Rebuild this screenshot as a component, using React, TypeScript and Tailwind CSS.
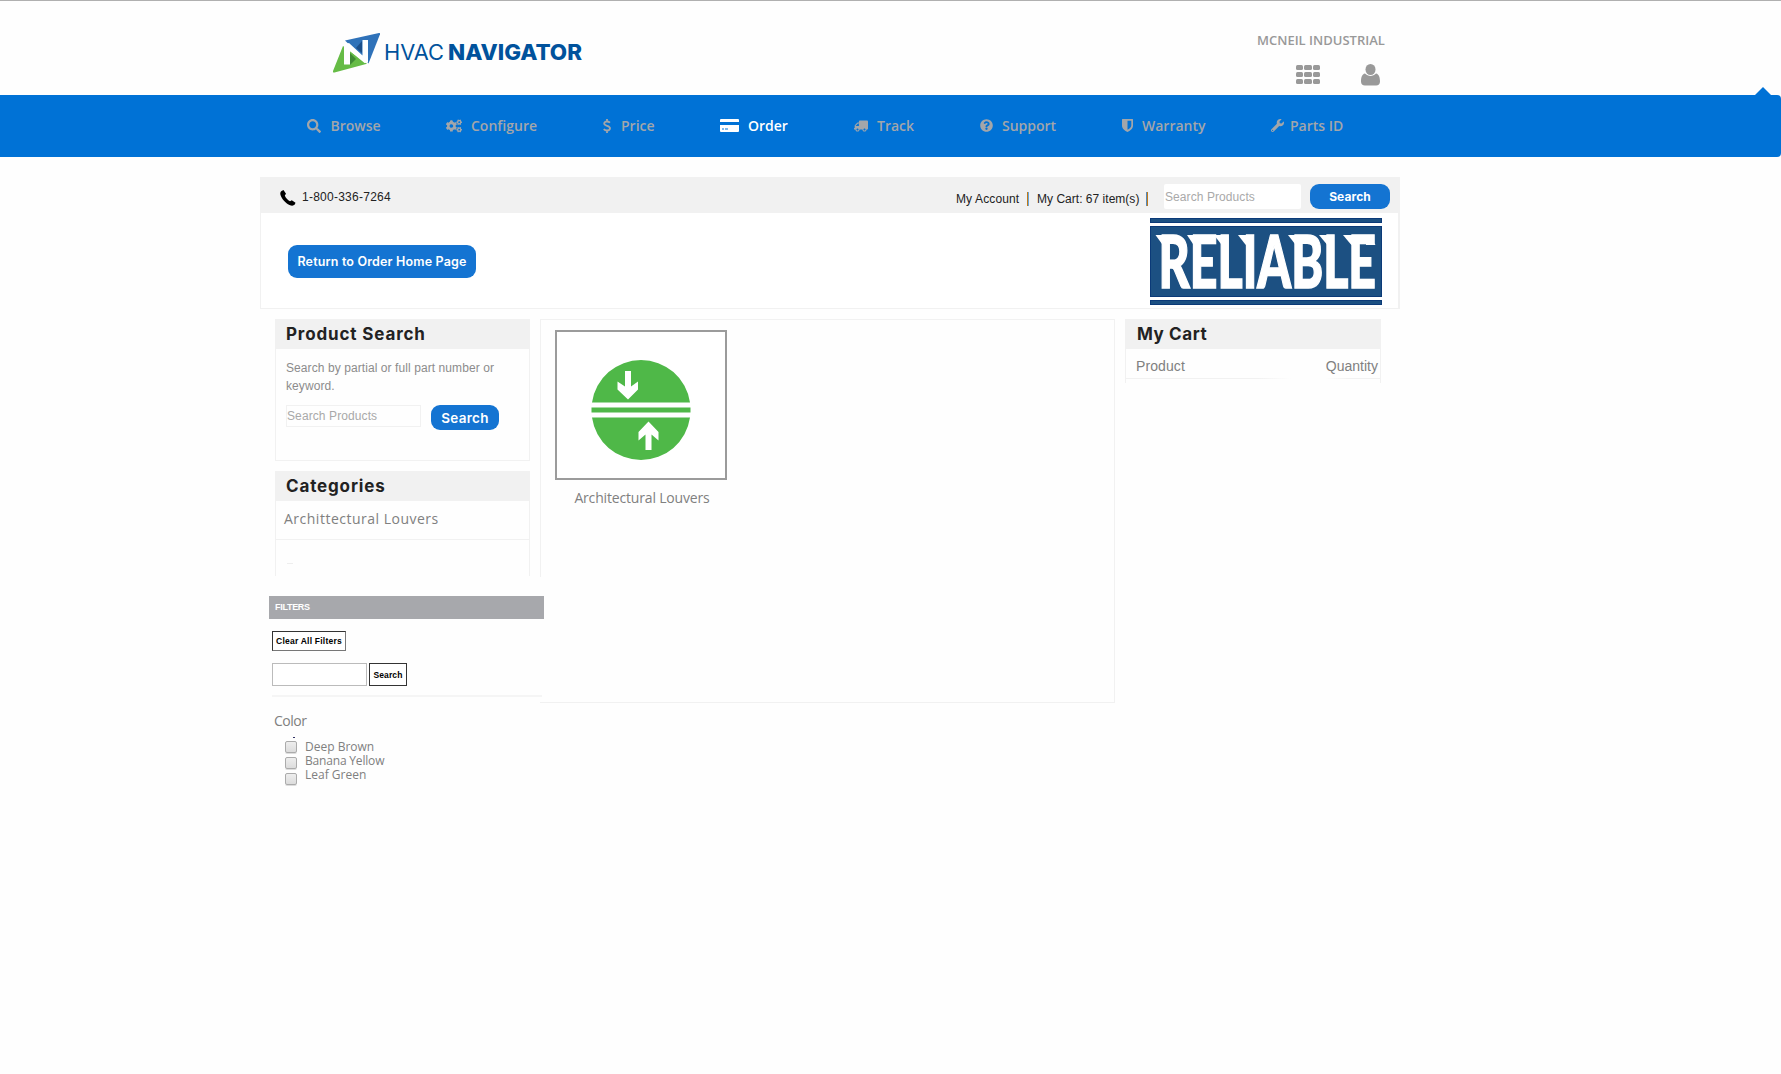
import React from "react";
import {
  FaSearch, FaCogs, FaTruck, FaQuestionCircle, FaWrench, FaPhoneAlt,
} from "react-icons/fa";

const OS = "font-['Open_Sans',sans-serif]";
const LS = "font-['Liberation_Sans',sans-serif]";
const MO = "font-['Inter',sans-serif]";

function CardIcon() {
  return (
    <svg width="19" height="13" viewBox="0 0 19 13" fill="currentColor">
      <path d="M1 0h17a1 1 0 0 1 1 1v2H0V1a1 1 0 0 1 1-1ZM0 6h19v6a1 1 0 0 1-1 1H1a1 1 0 0 1-1-1Zm2 3.5v1h2v-1Zm3 0v1h3v-1Z" fillRule="evenodd" />
    </svg>
  );
}

function ShieldIcon() {
  return (
    <svg width="11" height="13" viewBox="0 0 11 13" fill="currentColor">
      <path fillRule="evenodd" d="M.5 0h10q.5 0 .5.5V6.500c0 3.200-3 5.300-5.500 6.500C3 11.800 0 9.700 0 6.500V.5Q0 0 .5 0ZM5.500 1.800v9c1.900-1 3.800-2.500 3.800-4.300V1.800Z" />
    </svg>
  );
}

function DollarIcon() {
  return (
    <svg width="8" height="14" viewBox="0 0 8 14" fill="none" stroke="currentColor" strokeWidth="1.800">
      <path d="M7 3.600C6 2.800 5 2.500 4 2.500 2.500 2.500 1.200 3.200 1.200 4.600 1.200 7.400 7 6.200 7 9.300 7 10.700 5.700 11.500 4 11.500 2.700 11.500 1.500 11 .7 10.200M4 0v2.500M4 11.500V14" />
    </svg>
  );
}

const nav = [
  { label: "Browse", icon: <FaSearch size={14} />, item: "w-[139px]", slot: "w-[23.500px]" },
  { label: "Configure", icon: <FaCogs size={16} />, item: "w-[157px]", slot: "w-[25px]" },
  { label: "Price", icon: <DollarIcon />, item: "w-[117px]", slot: "w-[18px]" },
  { label: "Order", icon: <CardIcon />, item: "w-[134px]", slot: "w-[28px]", active: true },
  { label: "Track", icon: <FaTruck size={14} className="-scale-x-100" />, item: "w-[126px]", slot: "w-[23px]" },
  { label: "Support", icon: <FaQuestionCircle size={13} />, item: "w-[142px]", slot: "w-[22px]" },
  { label: "Warranty", icon: <ShieldIcon />, item: "w-[149px]", slot: "w-[20px]" },
  { label: "Parts ID", icon: <FaWrench size={13} />, item: "w-[90px]", slot: "w-[19px]" },
];

function NavigatorLogo() {
  return (
    <svg width="252" height="44" viewBox="0 0 252 44" className="shrink-0">
      <path d="M12 8.500 L46 1 Q47.500 .8 47 2.300 L35.500 31.500 Z" fill="#2f72b9" />
      <path d="M10 14 L0 39 Q-.3 41 1.500 40.500 L34 31.800 Z" fill="#66bc46" />
      <path d="M29 9 V21 L23 16 Z" fill="#1c4f8a" />
      <path d="M17 21 V33 L23 27 Z" fill="#3f8a34" />
      <path d="M11 32.500 V12.500 L16 11 L29.500 23.500 V8 H35 V30.500 L31.500 31 L17 19 V32.500 Z" fill="#fff" />
      <text x="51" y="28" fill="#00529c" fontFamily="Inter, sans-serif" fontSize="21.500" fontWeight="400" textLength="60" lengthAdjust="spacingAndGlyphs">HVAC</text>
      <text x="115" y="28" fill="#00529c" fontFamily="Inter, sans-serif" fontSize="21.500" fontWeight="800" textLength="134" lengthAdjust="spacingAndGlyphs">NAVIGATOR</text>
    </svg>
  );
}

function ReliableLogo() {
  return (
    <svg width="232" height="87" viewBox="0 0 232 87">
      <g fill="#1c5082" stroke="#0b3a78" strokeWidth="1">
        <rect x=".5" y=".5" width="231" height="4" />
        <rect x=".5" y="8.500" width="231" height="70" />
        <rect x=".5" y="82.500" width="231" height="4" />
      </g>
      <text
        x="8.500" y="70" textLength="217.500" lengthAdjust="spacingAndGlyphs"
        fill="#fff" stroke="#fff" strokeWidth="1.600"
        fontFamily="Lato, sans-serif" fontSize="73" fontWeight="900"
      >RELIABLE</text>
      <g fill="#fff">
        <path d="M5.500 17H14V30L12 26Z" />
        <path d="M37 17H47V30L43 26Z" />
        <path d="M64 17H75V30L71 26Z" />
        <path d="M88 17H99V30L95 26Z" />
        <path d="M138 17H149V30L145 26Z" />
        <path d="M169 17H180V30L176.500 26Z" />
        <path d="M193 17H205V30L200.500 26Z" />
        <path d="M216 17H218.500L225.500 27H216Z" />
      </g>
    </svg>
  );
}

function LouverIcon() {
  return (
    <svg width="100" height="100" viewBox="0 0 100 100">
      <path d="M1 42.500a49.500 49.500 0 0 1 98 0Z M1 57.500a49.500 49.500 0 0 0 98 0Z M.5 47.500h99v5H.5Z" fill="#4fb848" />
      <path d="M34 11h6v15.500l7-5v8L37 39.500 26.500 29.500v-8l7.500 5Z" fill="#fff" />
      <path d="M54.500 90h6V74.500l7 6v-8.500L57.500 61.500 47.500 72v8.500l7-6Z" fill="#fff" />
    </svg>
  );
}

function PanelTitle({ children, track }: { children: React.ReactNode; track: string }) {
  return (
    <h2 className={`${MO} ${track} flex h-[30px] items-center bg-[#f1f1f1] pl-[10px] pt-[2px] text-[17px] font-bold text-[#222]`}>
      {children}
    </h2>
  );
}

const btn = "flex items-center justify-center rounded-[9px] bg-[#1474d2] text-white whitespace-nowrap";

export default function App() {
  return (
    <div className={`${LS} h-[1074px] w-[1781px] overflow-hidden bg-[#fefefe] whitespace-nowrap`}>
      <header className="flex h-[95px] border-t border-[#b0b0b0] pl-[333px]">
        <div className="w-[924px] pt-[31px]"><NavigatorLogo /></div>
        <div className="w-[130px]">
          <div className={`${OS} mt-[30px] h-[18px] text-[13px] font-semibold leading-[18px] text-[#999]`}>MCNEIL INDUSTRIAL</div>
          <div className="mt-[14px] flex text-[#999]">
            <div className="ml-[39px] mt-[2px] grid h-[19px] w-[24px] grid-cols-3 gap-x-[1px] gap-y-[1.500px]">
              {Array.from({ length: 9 }, (_, i) => <span key={i} className="rounded-[1.500px] bg-[#999]" />)}
            </div>
            <svg className="ml-[41px] mt-px" width="19" height="22" viewBox="0 0 19 22" fill="currentColor">
              <ellipse cx="9.500" cy="5.500" rx="5" ry="5.500" />
              <path d="M4 9.500C1 10 0 13.500 0 17.500 0 20 1.500 21.500 4 21.500H15c2.500 0 4-1.500 4-4C19 13.500 18 10 15 9.500 12 12.800 7 12.800 4 9.500Z" />
            </svg>
          </div>
        </div>
      </header>

      <nav className={`${OS} relative flex h-[62px] items-center rounded-r-[4px] bg-[#0072d6] pb-px pl-[307px] text-[14px] font-semibold text-[#a3a6aa]`}>
        {nav.map((n) => (
          <a key={n.label} className={`flex items-center ${n.item} ${n.active ? "text-white" : ""}`}>
            <span className={`${n.slot} flex`}>{n.icon}</span>
            <span className="leading-5">{n.label}</span>
          </a>
        ))}
        <span className="absolute -top-[8px] right-[10px] h-0 w-0 border-x-[8px] border-b-[8px] border-x-transparent border-b-[#0072d6]" />
      </nav>

      <section className="ml-[260px] mt-[20px] w-[1140px]">
        <div className="flex h-[36px] bg-[#f1f1f1] text-[12px] leading-[16px] text-[#222]">
          <svg width="16" height="16" viewBox="0 0 16 16" className="ml-[20px] mt-[13px] text-black" fill="currentColor">
            <path d="M1.500 1 3.500 0 6 3.800 4.800 5.600C5.500 7.800 7.800 10.300 10 11.200L11.800 10.200 15.500 12.800 14.800 14.600C13.500 16 11.500 16 9.500 15 5.500 13 1.800 9 .5 5 0 3.300.3 1.900 1.500 1Z" />
          </svg>
          <span className="ml-[6px] mt-[12px] w-[654px] tracking-[0.25px]">1-800-336-7264</span>
          <span className="mt-[14px] w-[70.500px] tracking-[0.12px]">My Account</span>
          <span className="mt-[15px] h-[14px] w-[2px] border-l border-r border-l-[#c07a1a] border-r-[#66a5dc]" />
          <span className="ml-[8.500px] mt-[14px] w-[109px] tracking-[0.02px]">My Cart: 67 item(s)</span>
          <span className="mt-[15px] h-[14px] w-[2px] border-l border-r border-l-[#5688b8] border-r-[#c07a1a]" />
          <span className="ml-[16px] mt-[7px] h-[25px] w-[137px] rounded-[2px] bg-white pl-px pt-[5px] tracking-[0.08px] text-[#a9a9a9]">Search Products</span>
          <button className={`${btn} ${MO} ml-[9px] mt-[7px] h-[25px] w-[80px] text-[12px] font-bold tracking-[0.08px]`}>Search</button>
        </div>
        <div className="flex h-[96px] items-start justify-between border border-r-2 border-t-0 border-[#f1f1f1] bg-white pl-[27px] pr-[16px]">
          <button className={`${btn} ${MO} mt-[32px] h-[33px] w-[188px] pt-px text-[12.500px] font-semibold tracking-[0.16px]`}>Return to Order Home Page</button>
          <div className="mt-[5px]"><ReliableLogo /></div>
        </div>
      </section>

      <div className="ml-[269px] mt-[10px] flex">
        <aside className="w-[271px]">
          <section className="ml-[6px] h-[142px] w-[255px] border border-t-0 border-[#f1f1f1]">
            <PanelTitle track="tracking-[0.85px]">Product Search</PanelTitle>
            <p className="ml-[10px] mt-[10px] text-[12px] leading-[18px] tracking-[0.08px] text-[#8c8c8c]">Search by partial or full part number or<br />keyword.</p>
            <div className="ml-[10px] mt-[10px] flex">
              <span className="h-[22px] w-[135px] border border-[#f1f1f1] text-[12px] leading-[20px] tracking-[0.1px] text-[#a9a9a9]">Search Products</span>
              <button className={`${btn} ${MO} ml-[10px] h-[25px] w-[68px] pt-px text-[13.500px] font-semibold tracking-[0.3px]`}>Search</button>
            </div>
          </section>
          <section className="ml-[6px] mt-[10px] h-[105px] w-[255px] border-x border-[#f1f1f1]">
            <PanelTitle track="tracking-[0.85px]">Categories</PanelTitle>
            <div className={`${OS} h-[39px] border-b border-[#f1f1f1] pl-[8px] text-[14px] leading-[36px] tracking-[0.5px] text-[#808080]`}>Archittectural Louvers</div>
            <span className="ml-[11px] mt-[23px] block h-px w-[6px] bg-[#eee]" />
          </section>

          <section className="mt-[20px]">
            <h3 className="relative z-10 h-[23px] w-[275px] bg-[#a7a8ac] pl-[6px] text-[9px] font-bold leading-[23px] tracking-[-0.3px] text-white">FILTERS</h3>
            <button className="ml-[3px] mt-[12px] block h-[20px] w-[74px] border border-[#333] border-b-[#777] border-r-[#777] bg-white text-[8.500px] font-bold leading-[18px] tracking-[0.22px] text-black">Clear All Filters</button>
            <div className="ml-[3px] mt-[12px] flex">
              <span className="h-[23px] w-[95px] border border-[#bbb] bg-white" />
              <button className="ml-[2px] h-[23px] w-[38px] border border-[#333] bg-white pt-px text-[8.500px] font-bold tracking-[0.1px] text-black">Search</button>
            </div>
            <div className="relative z-10 ml-[3px] mt-[9px] h-[2px] w-[270px] bg-[#f5f5f5]" />
            <h4 className={`${OS} ml-[5px] mt-[15px] h-[18px] text-[14px] leading-[18px] tracking-[-0.5px] text-[#808080]`}>Color</h4>
            <span className="ml-[24px] mt-[7px] block h-px w-[2px] bg-[#336]" />
            <div className="ml-[16px] flex">
              <div className="mt-[3px] flex flex-col gap-[4px]">
                {[0, 1, 2].map((i) => (
                  <span key={i} className="h-[12px] w-[12px] rounded-[2px] border border-[#ababab] bg-linear-to-b from-[#eee] to-[#dcdcdc] shadow-[0_1px_0_#ddd]" />
                ))}
              </div>
              <ul className={`${OS} ml-[8px] mt-[2px] text-[12px] leading-[14px] text-[#808080]`}>
                <li>Deep Brown</li>
                <li className="tracking-[-0.18px]">Banana Yellow</li>
                <li>Leaf Green</li>
              </ul>
            </div>
          </section>
        </aside>

        <main className="relative h-[384px] w-[575px] border border-l-0 border-[#f1f1f1]">
          <span className="absolute left-0 top-0 h-[257px] w-px bg-[#f1f1f1]" />
          <figure className="ml-[15px] mt-[10px] w-[172px]">
            <div className="flex h-[150px] items-center justify-center border-2 border-[#9b9b9b] bg-white pt-[9px]"><LouverIcon /></div>
            <figcaption className={`${OS} mt-[8px] pl-[2px] text-center text-[14px] leading-[20px] tracking-[-0.17px] text-[#808080]`}>Architectural Louvers</figcaption>
          </figure>
        </main>

        <aside className="ml-[10px] h-[64px] w-[256px] border-x border-[#f1f1f1]">
          <PanelTitle track="tracking-[0.6px]"><span className="ml-px">My Cart</span></PanelTitle>
          <div className="flex h-[29px] justify-between pl-[10px] pr-[2px] text-[14px] leading-[34px] text-[#808080]">
            <span className="tracking-[0.1px]">Product</span>
            <span>Quantity</span>
          </div>
          <div className="flex h-px justify-between">
            <span className="w-[165px] bg-linear-to-r from-[#f1f1f1] from-80% to-transparent" />
            <span className="w-[54px] bg-linear-to-l from-[#f1f1f1] from-60% to-transparent" />
          </div>
        </aside>
      </div>
    </div>
  );
}
